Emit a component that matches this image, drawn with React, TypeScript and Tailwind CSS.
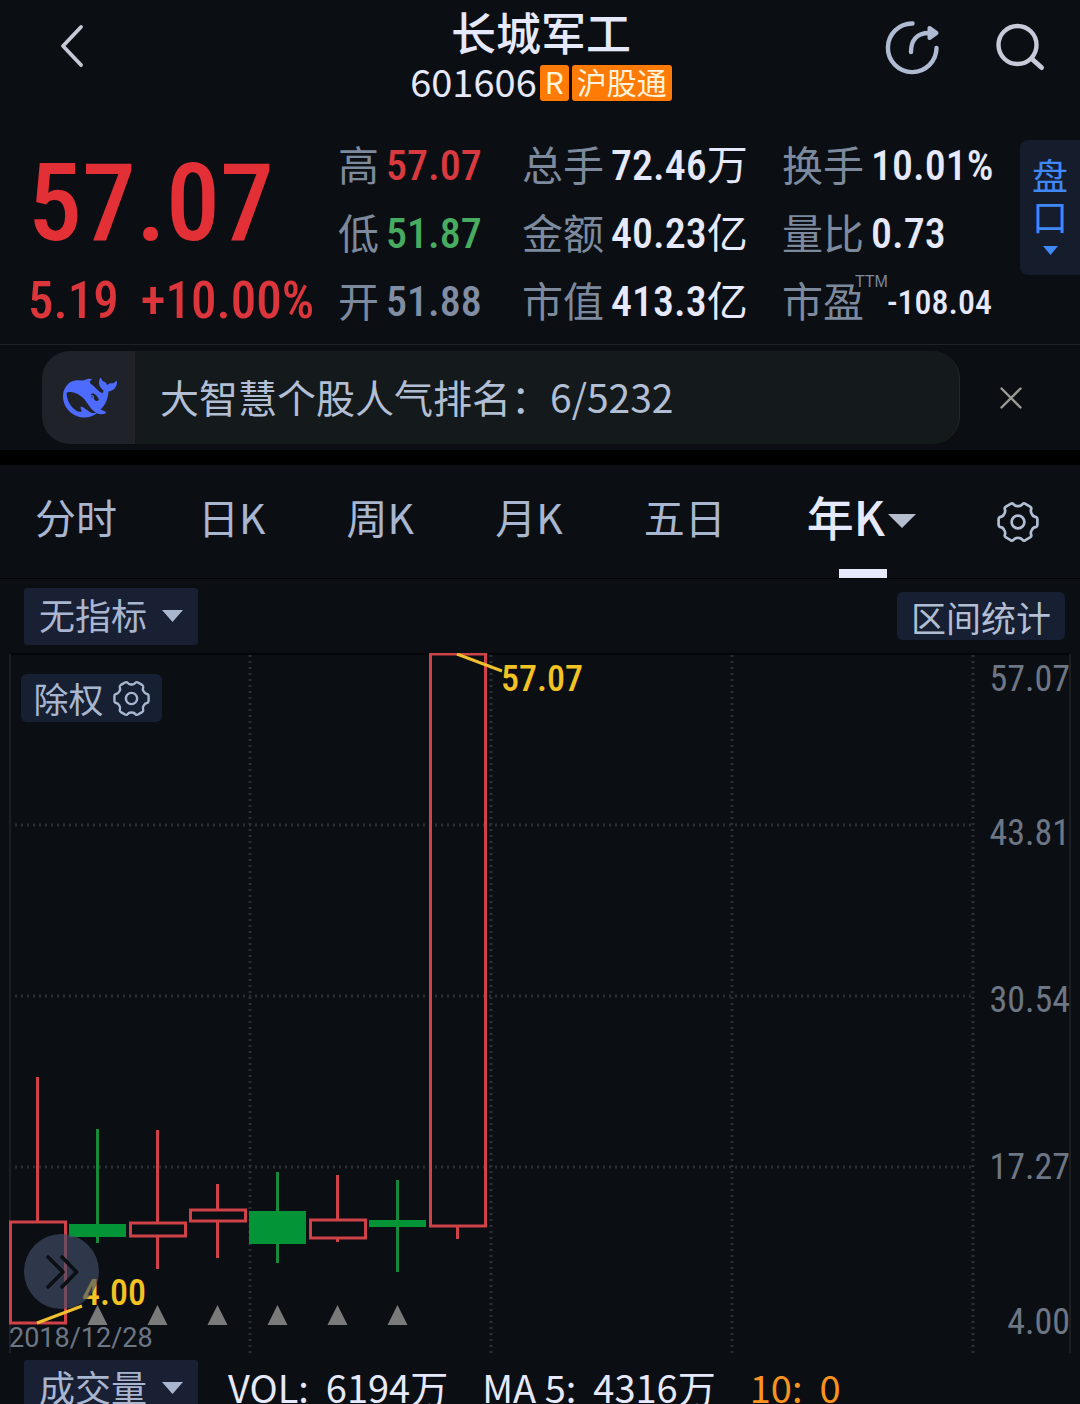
import { useState } from "react";

const quotes = [
  [
    { label: "高", value: "57.07", color: "text-[#d93a40]" },
    { label: "低", value: "51.87", color: "text-[#47ab60]" },
    { label: "开", value: "51.88", color: "text-[#808da3]" },
  ],
  [
    { label: "总手", value: "72.46", unit: "万" },
    { label: "金额", value: "40.23", unit: "亿" },
    { label: "市值", value: "413.3", unit: "亿" },
  ],
  [
    { label: "换手", value: "10.01%" },
    { label: "量比", value: "0.73" },
    { label: "市盈", value: "-108.04", note: "TTM" },
  ],
];

const tabs = ["分时", "日K", "周K", "月K", "五日", "年K"];

const candles = [
  { up: true, high: 1077, top: 1222, bottom: 1323, low: 1323 },
  { up: false, high: 1129, top: 1224, bottom: 1237, low: 1243 },
  { up: true, high: 1130, top: 1223, bottom: 1236, low: 1269 },
  { up: true, high: 1184, top: 1210, bottom: 1221, low: 1258 },
  { up: false, high: 1172, top: 1211, bottom: 1244, low: 1263 },
  { up: true, high: 1175, top: 1220, bottom: 1238, low: 1242 },
  { up: false, high: 1180, top: 1220, bottom: 1227, low: 1272 },
  { up: true, high: 654, top: 654, bottom: 1226, low: 1239 },
];

const priceAxis = [
  { price: "57.07", y: 691 },
  { price: "43.81", y: 845 },
  { price: "30.54", y: 1012 },
  { price: "17.27", y: 1179 },
  { price: "4.00", y: 1334 },
];

const din = "font-['Roboto_Condensed','Noto_Sans_CJK_SC',sans-serif]";

// six flat lobes with rounded dips between them
function gearPath() {
  const at = (deg: number, r: number) => {
    const a = (deg * Math.PI) / 180;
    return `${(21 + r * Math.cos(a)).toFixed(2)} ${(21 + r * Math.sin(a)).toFixed(2)}`;
  };
  let d = "";
  for (let k = 0; k < 6; k++) {
    const c = k * 60;
    d += `${k === 0 ? "M" : "L"}${at(c - 15, 18.8)} Q${at(c - 13, 19.8)} ${at(c - 8, 19.6)} L${at(c + 8, 19.6)} Q${at(c + 13, 19.8)} ${at(c + 15, 18.8)} C${at(c + 19, 16.4)} ${at(c + 23, 15.8)} ${at(c + 30, 16)} C${at(c + 37, 15.8)} ${at(c + 41, 16.4)} ${at(c + 45, 18.8)}`;
  }
  return d + "Z";
}

function Gear({ className }: { className?: string }) {
  return (
    <svg viewBox="0 0 42 42" className={className} fill="none" stroke="currentColor" strokeWidth="2.7" strokeLinejoin="round">
      <path d={gearPath()} />
      <circle cx="21" cy="21" r="6.4" />
    </svg>
  );
}

function Caret({ className }: { className?: string }) {
  return (
    <svg viewBox="0 0 20 12" className={className} fill="currentColor" preserveAspectRatio="none">
      <path d="M0 0h20L10 12z" />
    </svg>
  );
}

function Whale() {
  return (
    <svg viewBox="0 0 24 24" className="size-[54px]" fill="#4d6bfe">
      <path d="M23.748 4.482c-.254-.124-.364.113-.512.234-.051.039-.094.09-.137.136-.372.397-.806.657-1.373.626-.829-.046-1.537.214-2.163.848-.133-.782-.575-1.248-1.247-1.548-.352-.156-.708-.311-.955-.65-.172-.241-.219-.51-.305-.774-.055-.16-.11-.323-.293-.35-.2-.031-.278.136-.356.276-.313.572-.434 1.202-.422 1.84.027 1.436.633 2.58 1.838 3.393.137.093.172.187.129.323-.082.28-.18.552-.266.833-.055.179-.137.217-.329.14a5.526 5.526 0 01-1.736-1.18c-.857-.828-1.631-1.742-2.597-2.458a11.365 11.365 0 00-.689-.471c-.985-.957.13-1.743.388-1.836.27-.098.093-.432-.779-.428-.872.004-1.67.295-2.687.684a3.055 3.055 0 01-.465.137 9.597 9.597 0 00-2.883-.102c-1.885.21-3.39 1.102-4.497 2.623C.082 8.606-.231 10.684.152 12.85c.403 2.284 1.569 4.175 3.36 5.653 1.858 1.533 3.997 2.284 6.438 2.14 1.482-.085 3.133-.284 4.994-1.86.47.234.962.327 1.78.397.63.059 1.236-.03 1.705-.128.735-.156.684-.837.419-.961-2.155-1.004-1.682-.595-2.113-.926 1.096-1.296 2.746-2.642 3.392-7.003.05-.347.007-.565 0-.845-.004-.17.035-.237.23-.256a4.173 4.173 0 001.545-.475c1.396-.763 1.96-2.015 2.093-3.517.02-.23-.004-.467-.247-.588zM11.581 18c-2.089-1.642-3.102-2.183-3.52-2.16-.392.024-.321.471-.235.763.09.288.207.486.371.739.114.167.192.416-.113.603-.673.416-1.842-.14-1.897-.167-1.361-.802-2.5-1.86-3.301-3.307-.774-1.393-1.224-2.887-1.298-4.482-.02-.386.093-.522.477-.592a4.696 4.696 0 011.529-.039c2.132.312 3.946 1.265 5.468 2.774.868.86 1.525 1.887 2.202 2.891.72 1.066 1.494 2.082 2.48 2.914.348.292.625.514.891.677-.802.09-2.14.11-3.054-.614zm1-6.44a.306.306 0 01.415-.287.302.302 0 01.2.288.306.306 0 01-.31.307.303.303 0 01-.304-.308zm3.11 1.596c-.2.081-.399.151-.59.16a1.245 1.245 0 01-.798-.254c-.274-.23-.47-.358-.552-.758a1.73 1.73 0 01.016-.588c.07-.327-.008-.537-.239-.727-.187-.156-.426-.199-.688-.199a.559.559 0 01-.254-.078c-.11-.054-.2-.19-.114-.358.028-.054.16-.186.192-.21.356-.202.767-.136 1.146.016.352.144.618.408 1.001.782.391.451.462.576.685.914.176.265.336.537.445.848.067.195-.019.354-.25.452z" />
    </svg>
  );
}

function Header() {
  return (
    <header className="flex items-start justify-between pl-[54px] pr-8">
      <div className="flex w-[145px] pt-[22px]">
        <button aria-label="返回" className="cursor-pointer">
          <svg viewBox="0 0 36 48" className="h-12 w-9" fill="none" stroke="#c6c9d6" strokeWidth="3.8" strokeLinecap="round" strokeLinejoin="round">
            <path d="M27 5 9 24 27 43" />
          </svg>
        </button>
      </div>
      <div className="flex flex-col items-center">
        <h1 className="text-[45px] leading-[64px] font-medium text-[#e6e8fb]">长城军工</h1>
        <div className="flex h-[38px] items-center gap-[3px]">
          <span className="pb-1 text-[38px] leading-[38px] text-[#e6e8fb]">601606</span>
          <span className="h-9 rounded-[3px] bg-[#ff7b05] px-[5px] text-[30px] leading-8 text-[#fff3dc]">R</span>
          <span className="h-9 rounded-[3px] bg-[#ff7b05] px-[5px] text-[30px] leading-8 text-[#fff3dc]">沪股通</span>
        </div>
      </div>
      <div className="flex w-[165px] items-center justify-between pt-[18px]">
        <button aria-label="分享" className="cursor-pointer">
          <svg viewBox="0 0 58 58" className="size-[58px]" fill="none" stroke="#aebbd2" strokeWidth="4.4" strokeLinecap="round">
            <path d="M29.5 5.5A24.3 24.3 0 1 0 53.5 30" />
            <path d="M28 34c0-12 6-19 18-19" />
            <path d="M46.500 10v10l7-5z" fill="#aebbd2" strokeWidth="4" strokeLinejoin="round" />
          </svg>
        </button>
        <button aria-label="搜索" className="cursor-pointer">
          <svg viewBox="0 0 54 54" className="size-[54px]" fill="none" stroke="#c9cad9" strokeWidth="4.4" strokeLinecap="round">
            <circle cx="23.5" cy="25" r="19" />
            <path d="m38 39 9.500 8.500" strokeWidth="5" />
          </svg>
        </button>
      </div>
    </header>
  );
}

function Quote() {
  return (
    <section className="flex items-start pt-[30px] pl-7">
      <div className={`w-[310px] ${din} font-medium text-[#e33036]`}>
        <p className="pt-2 text-[108px] leading-[126px]">57.07</p>
        <p className="flex gap-[22px] text-[51px] leading-[70px] text-[#dc353b]">
          <span>5.19</span>
          <span>+10.00%</span>
        </p>
      </div>
      <div className="grid flex-1 grid-cols-[184fr_260fr_238fr]">
        {quotes.map((column) => (
          <dl key={column[0].label}>
            {column.map((item) => (
              <div key={item.label} className="flex h-[68px] items-center gap-[7px] text-[41px]">
                <dt className="relative pb-[6px] leading-[62px] text-[#7d8a9e]">
                  {item.label}
                  {"note" in item && (
                    <span className="absolute top-[2px] left-[73px] font-['Liberation_Sans',sans-serif] text-[16px] leading-6">{item.note}</span>
                  )}
                </dt>
                <dd
                  className={`flex items-center ${din} leading-[68px] font-medium whitespace-nowrap ${"color" in item ? item.color : "text-[#e6e8fb]"} ${
                    "note" in item ? "pl-4 text-[34px]" : "text-[42px]"
                  }`}
                >
                  {item.value}
                  {"unit" in item && <span className="text-[41px] font-normal">{item.unit}</span>}
                </dd>
              </div>
            ))}
          </dl>
        ))}
      </div>
      <button className="mt-2 flex h-[135px] w-[60px] cursor-pointer flex-col items-center rounded-l-lg bg-[#151d2d] pt-[14px] text-[36px] leading-[41px] text-[#4088f5]">
        <span className="w-9">盘口</span>
        <Caret className="mt-[10px] h-[9px] w-[15px]" />
      </button>
    </section>
  );
}

function Banner() {
  return (
    <section className="flex items-center border-t border-[#1f2327] pt-[6px] pb-[6px] pl-[42px]">
      <div className="flex h-[93px] w-[918px] overflow-hidden rounded-[28px] border-r border-[#24282b] bg-[#14191c]">
        <div className="flex w-[93px] items-center justify-center bg-[#1f2329] pl-[3px]">
          <Whale />
        </div>
        <p className="pl-[25px] text-[39px] leading-[91px] text-[#b1bed3]">大智慧个股人气排名：6/5232</p>
      </div>
      <button aria-label="关闭" className="ml-[38px] cursor-pointer">
        <svg viewBox="0 0 26 26" className="size-[26px]" stroke="#9b9b94" strokeWidth="2.4" strokeLinecap="round">
          <path d="m3.5 3.5 19 19m0-19-19 19" />
        </svg>
      </button>
    </section>
  );
}

function PeriodTabs() {
  const [active, setActive] = useState("年K");

  return (
    <nav className="flex h-[114px] items-center justify-between border-b border-black pr-[41px] pl-[35px]">
      {tabs.map((tab) => (
        <button
          key={tab}
          onClick={() => setActive(tab)}
          className={`relative flex h-full cursor-pointer items-center pb-[10px] ${
            tab === active ? "text-[47px] font-medium text-[#e6e8fb]" : "text-[41px] text-[#a9b6d0]"
          }`}
        >
          {tab}
          {tab === active && (
            <>
              <Caret className="mt-2 ml-[3px] h-[14px] w-[28px] text-[#b4bccd]" />
              <span className="absolute bottom-0 left-[32px] h-[9px] w-12 bg-[#e6e8fb]" />
            </>
          )}
        </button>
      ))}
      <button aria-label="设置" className="cursor-pointer text-[#b1bed3]">
        <Gear className="size-[42px]" />
      </button>
    </nav>
  );
}

function Picker({ label, option }: { label: string; option: string }) {
  return (
    <div className="relative text-[#a9b6d0]">
      <select aria-label={label} className="h-[57px] w-[174px] cursor-pointer appearance-none rounded-[3px] bg-[#1a2034] pb-1 pl-[15px] text-[36px] leading-[53px] outline-none">
        <option>{option}</option>
      </select>
      <Caret className="pointer-events-none absolute top-[22px] right-[15px] h-3 w-[21px]" />
    </div>
  );
}

function Chart() {
  return (
    <section className="relative">
      <svg viewBox="0 653 1080 700" className="block w-full" role="img" aria-label="年K线图">
        <path d="M10 653H1070" stroke="#030405" strokeWidth="3" />
        <path d="M10 654V1353M1070 654V1353" stroke="#1b1f23" strokeWidth="2" />
        <g stroke="#2b2f35" strokeWidth="3">
          <path d="M15 825H973M15 996H973M15 1167H973" strokeDasharray="2 4" />
          <path d="M250 655V1353M491 655V1353M732 655V1353M973 655V1353" strokeDasharray="2 4" />
        </g>
        {candles.map((candle, i) => {
          const x = 37.5 + i * 60;
          return candle.up ? (
            <g key={i} stroke="#cf4248" strokeWidth="3" fill="none">
              <path d={`M${x} ${candle.high}V${candle.top}M${x} ${candle.bottom}V${candle.low}`} />
              <rect x={x - 27} y={candle.top} width="55" height={candle.bottom - candle.top} />
            </g>
          ) : (
            <g key={i} stroke="#18883a" strokeWidth="3">
              <path d={`M${x} ${candle.high}V${candle.low}`} />
              <rect x={x - 28.5} y={candle.top} width="57" height={candle.bottom - candle.top} fill="#029436" stroke="none" />
            </g>
          );
        })}
        {[97, 157, 217, 277, 337, 397].map((x) => (
          <path key={x} d={`M${x + 0.5} 1305l10 20h-20z`} fill="#7a7a7a" />
        ))}
        <path d="M457 654 502 671M37 1323 82 1306" stroke="#f0c02e" strokeWidth="3" />
        <g className={`${din} text-[36px] font-medium`} fill="#f3c223">
          <text x="501" y="691">57.07</text>
          <text x="82" y="1305">4.00</text>
        </g>
        <g className={`${din} text-[36px]`} fill="#6d7684" textAnchor="end">
          {priceAxis.map((tick) => (
            <text key={tick.price} x="1070" y={tick.y}>
              {tick.price}
            </text>
          ))}
        </g>
        <text x="9" y="1347" className="font-['Roboto',sans-serif] text-[27px]" fill="#6d7684">
          2018/12/28
        </text>
      </svg>
      <button className="absolute top-[21px] left-[21px] flex h-12 w-[141px] cursor-pointer items-center justify-center gap-[9px] rounded-md bg-[#172032] text-[35px] leading-[48px] text-[#a9b6d0]">
        除权
        <Gear className="size-[37px]" />
      </button>
      <button aria-label="展开" className="absolute bottom-[44px] left-6 flex size-[75px] cursor-pointer items-center justify-center rounded-full bg-[#434f68]/65">
        <svg viewBox="0 0 34 36" className="h-9 w-[34px]" fill="none" stroke="#0b0f14" strokeWidth="3.6" strokeLinecap="round" strokeLinejoin="round">
          <path d="m3 3 15 15L3 33M17 3l14.5 15L17 33" />
        </svg>
      </button>
    </section>
  );
}

function Volume() {
  return (
    <section className="flex items-start pt-[7px] pl-6">
      <Picker label="副图指标" option="成交量" />
      <p className="flex gap-[34px] pl-[30px] text-[38px] leading-[54px] whitespace-nowrap text-[#e6e8fb]">
        <span className="flex gap-[17px]">
          <span>VOL:</span>
          <span>6194万</span>
        </span>
        <span className="flex gap-[17px]">
          <span>MA 5:</span>
          <span>4316万</span>
        </span>
        <span className="flex gap-[17px] text-[#f7931e]">
          <span>10:</span>
          <span>0</span>
        </span>
      </p>
    </section>
  );
}

export default function App() {
  return (
    <main className="h-screen overflow-hidden bg-[#0b0f13] font-['Noto_Sans_CJK_SC',sans-serif]">
      <Header />
      <Quote />
      <div className="h-2" />
      <Banner />
      <div className="h-[15px] bg-black" />
      <PeriodTabs />
      <div className="flex h-[74px] items-center justify-between pr-[15px] pl-6">
        <Picker label="主图指标" option="无指标" />
        <button className="h-12 cursor-pointer rounded-md bg-[#172032] px-[14px] text-[35px] leading-[50px] text-[#b1bed3]">区间统计</button>
      </div>
      <Chart />
      <Volume />
    </main>
  );
}
